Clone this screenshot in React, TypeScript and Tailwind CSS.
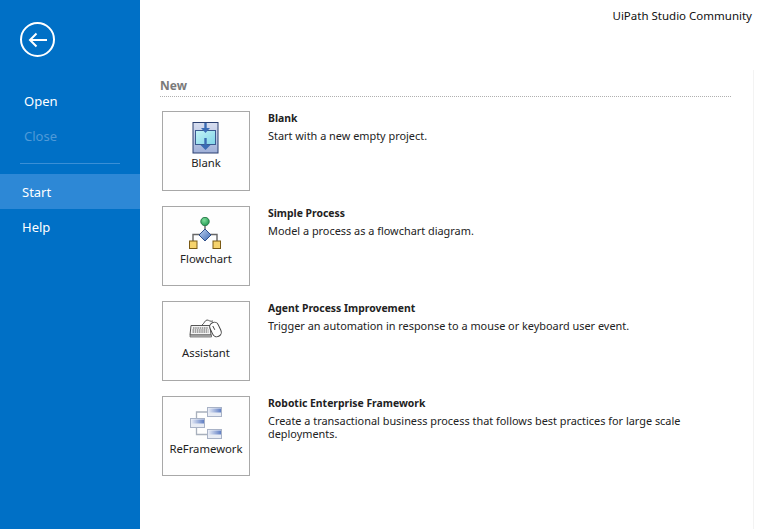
const ui = "font-['Noto_Sans','Open_Sans',sans-serif]";

function BlankIcon() {
  return (
    <svg width="28" height="32" viewBox="0 0 28 32">
      <defs>
        <linearGradient id="bg1" x1="0" y1="0" x2="0" y2="1">
          <stop offset="0" stopColor="#d8dff0" />
          <stop offset="1" stopColor="#9fb0d8" />
        </linearGradient>
        <linearGradient id="bg2" x1="0" y1="0" x2="1" y2="1">
          <stop offset="0" stopColor="#c4f4f6" />
          <stop offset="1" stopColor="#7fd4e8" />
        </linearGradient>
      </defs>
      <rect x="1" y="0.5" width="25" height="30.500" fill="url(#bg1)" stroke="#2a3f70" />
      <rect x="3.500" y="8.500" width="20" height="14" fill="url(#bg2)" stroke="#3a5a90" />
      <path d="M13.500 1v5" stroke="#3b6cb4" strokeWidth="2.400" />
      <path d="M9 6h9l-4.500 5z" fill="#3b6cb4" />
      <path d="M13.500 16v8" stroke="#3b6cb4" strokeWidth="2.400" />
      <path d="M8.500 23h10l-5 5z" fill="#3b6cb4" />
    </svg>
  );
}

function FlowchartIcon() {
  return (
    <svg width="34" height="32" viewBox="0 0 34 32">
      <defs>
        <radialGradient id="fg1" cx="0.4" cy="0.35" r="0.7">
          <stop offset="0" stopColor="#7fdc9c" />
          <stop offset="1" stopColor="#1f9a50" />
        </radialGradient>
        <linearGradient id="fg2" x1="0" y1="0" x2="1" y2="1">
          <stop offset="0" stopColor="#c4d6f2" />
          <stop offset="1" stopColor="#3a68b4" />
        </linearGradient>
      </defs>
      <path d="M16 9v5M4 24v-6.500h24V24" fill="none" stroke="#666" strokeWidth="1.400" />
      <circle cx="16" cy="4.500" r="4.200" fill="url(#fg1)" stroke="#2a7a4a" />
      <path d="M16 12l6 6-6 6-6-6z" fill="url(#fg2)" stroke="#2f4f8a" />
      <rect x="0.500" y="24" width="7.500" height="7.500" fill="#f6d36c" stroke="#7a5a14" />
      <rect x="24" y="24" width="7.500" height="7.500" fill="#f6d36c" stroke="#7a5a14" />
    </svg>
  );
}

function AssistantIcon() {
  return (
    <svg width="34" height="22" viewBox="0 0 34 22">
      <path d="M13 7c2-1 3-5 5-5s3 2 6 1" fill="none" stroke="#555" />
      <path d="M2 7.500h19l1 9.500H1z" fill="#f4f4f4" stroke="#555" />
      <path d="M1 17h21.500v2H1z" fill="#c4c4c4" stroke="#555" strokeWidth="0.700" />
      <path d="M4 10h15M3.500 12h16M3.500 14h16" stroke="#555" strokeWidth="1.200" strokeDasharray="1.500 0.700" />
      <rect x="22" y="4" width="9" height="15" rx="4.500" transform="rotate(-25 26.500 11.500)" fill="#fff" stroke="#444" />
      <path d="M23.800 8l2 3.800" stroke="#444" />
    </svg>
  );
}

function ReframeworkIcon() {
  const Box = ({ x, y, id }: { x: number; y: number; id: string }) => (
    <g>
      <rect x={x} y={y} width="14" height="9" fill="#e8ecf4" stroke="#a8b2c6" />
      <rect x={x + 1} y={y + 1} width="12.500" height="4" fill={`url(#${id})`} />
    </g>
  );
  return (
    <svg width="32" height="32" viewBox="0 0 32 32">
      <defs>
        <linearGradient id="rf1" x1="0" y1="0" x2="1" y2="0">
          <stop offset="0" stopColor="#e4e9f5" />
          <stop offset="1" stopColor="#5f7ec4" />
        </linearGradient>
      </defs>
      <path d="M6.500 11V5h11.500M6.500 21v6.500h11.500" fill="none" stroke="#a8b0bc" strokeWidth="1.300" />
      <Box x={17.500} y={0.500} id="rf1" />
      <Box x={0.500} y={11.500} id="rf1" />
      <Box x={17.500} y={22.500} id="rf1" />
    </svg>
  );
}

const items = [
  { label: "Blank", title: "Blank", desc: "Start with a new empty project.", icon: <BlankIcon />, h: "h-[32px]", mt: "mt-[10px]", gap: "mt-[1px]" },
  { label: "Flowchart", title: "Simple Process", desc: "Model a process as a flowchart diagram.", icon: <FlowchartIcon />, h: "h-[32px]", mt: "mt-[10px]", gap: "mt-[2px]" },
  { label: "Assistant", title: "Agent Process Improvement", desc: "Trigger an automation in response to a mouse or keyboard user event.", icon: <AssistantIcon />, h: "h-[22px]", mt: "mt-[16px]", gap: "mt-[5px]" },
  { label: "ReFramework", title: "Robotic Enterprise Framework", desc: "Create a transactional business process that follows best practices for large scale deployments.", icon: <ReframeworkIcon />, h: "h-[32px]", mt: "mt-[10px]", gap: "mt-[2px]" },
];

export default function App() {
  return (
    <div className={`flex h-[529px] w-[757px] overflow-hidden bg-white ${ui}`}>
      <aside className="flex w-[140px] shrink-0 flex-col bg-[#0070c6] pt-[22px] text-[13px] text-white">
        <div className="ml-[20px] flex h-[35px] w-[35px] items-center justify-center rounded-full border-2 border-white">
          <svg width="20" height="16" viewBox="0 0 20 16" fill="none" stroke="#fff" strokeWidth="2">
            <path d="M19 8H2M8.500 1.500 2 8l6.500 6.500" />
          </svg>
        </div>
        <div className="mt-[27px] flex h-[35px] items-center pl-[24px]">Open</div>
        <div className="flex h-[35px] items-center pl-[24px] text-[#4f9ad8]">Close</div>
        <div className="mx-[20px] mt-[9px] h-px bg-[#3a8fd6]" />
        <div className="mt-[10px] flex h-[35px] items-center bg-[#2d88d6] pl-[22px] pt-[2px]">Start</div>
        <div className="flex h-[35px] items-center pl-[22px] pt-[2px]">Help</div>
      </aside>
      <main className="flex min-w-0 flex-1 flex-col">
        <div className="flex h-[70px] shrink-0 justify-end pr-[5px] pt-[7px] text-[11.500px] leading-[18px] text-[#111]">
          UiPath Studio Community
        </div>
        <div className="mr-[3px] flex-1 border-r border-[#f3f3f3] pl-[20px] pr-[22px]">
          <div className="h-[27px] border-b border-dotted border-[#b0b0b0] pt-[7px] text-[12px] font-bold leading-[18px] text-[#7a7a7a]">
            New
          </div>
          <div className="mt-[14px] flex flex-col gap-[15px] pl-[2px]">
            {items.map((it) => (
              <div key={it.label} className="flex">
                <div className="flex h-[80px] w-[88px] shrink-0 flex-col items-center border border-[#a8a8a8] bg-[#fefefe]">
                  <div className={`${it.mt} ${it.h} flex items-center`}>{it.icon}</div>
                  <div className={`${it.gap} text-[11.300px] leading-[16px] text-[#222]`}>{it.label}</div>
                </div>
                <div className="ml-[18px] min-w-0 pr-[30px] text-[10.900px] leading-[13px] text-[#222]">
                  <div className="text-[10.400px] font-bold leading-[14px]">{it.title}</div>
                  <div className="mt-[5px] leading-[12.500px]">{it.desc}</div>
                </div>
              </div>
            ))}
          </div>
        </div>
      </main>
    </div>
  );
}
